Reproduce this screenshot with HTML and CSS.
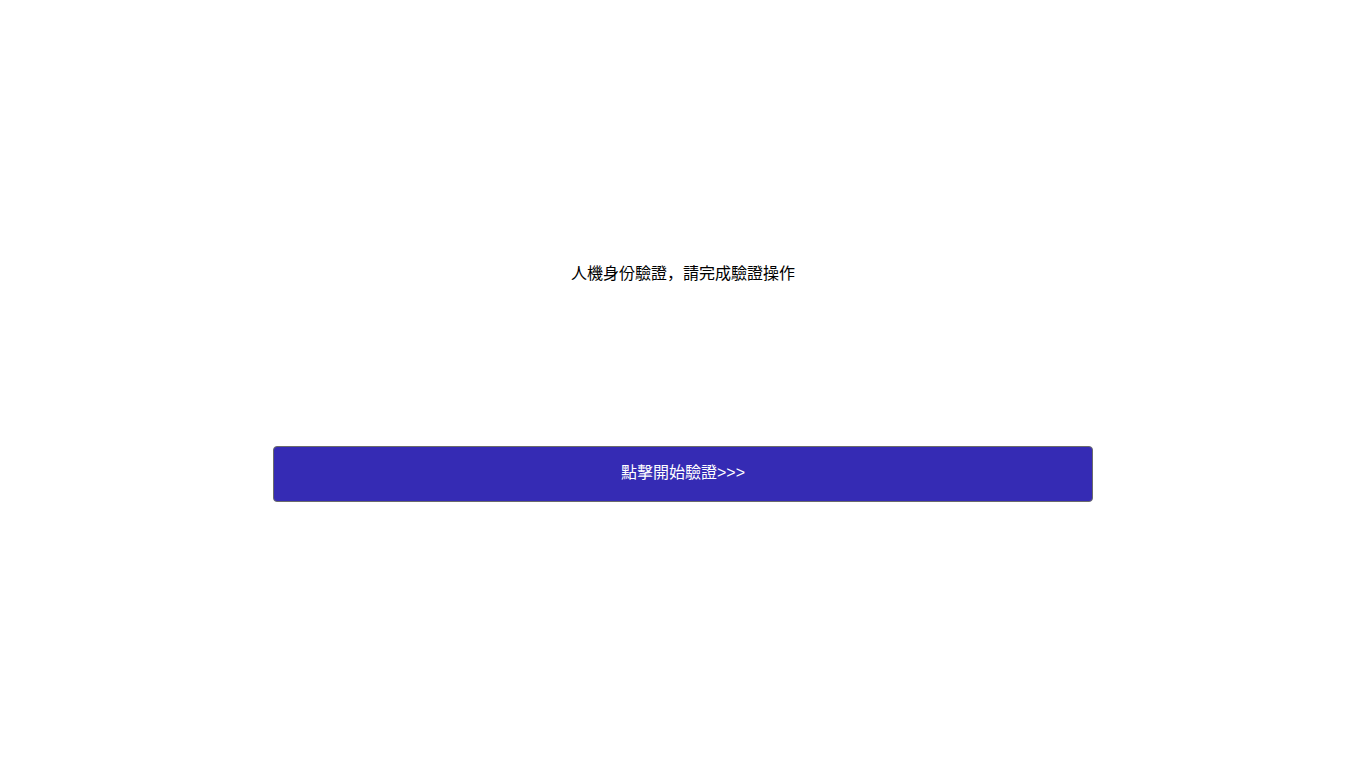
FILE: index.html
```html
<!DOCTYPE html>
<html>
<head>
<meta charset="utf-8">
<title>人機身份驗證</title>
<link rel="stylesheet" href="styles.css">
</head>
<body>
<main class="page">
  <p class="title">人機身份驗證，請完成驗證操作</p>
  <button class="verify-btn" type="button">點擊開始驗證&gt;&gt;&gt;</button>
</main>
</body>
</html>
```
FILE: styles.css
```css
html, body {
  margin: 0;
  padding: 0;
  background: #ffffff;
}
body {
  font-family: "Liberation Sans", "Noto Sans CJK JP", sans-serif;
  font-size: 16px;
  color: #000;
}
.page {
  display: flex;
  flex-direction: column;
  align-items: center;
  padding-top: 264px;
}
.title {
  margin: 0;
  line-height: 20px;
  text-align: center;
}
.verify-btn {
  margin-top: 162px;
  width: 60%;
  height: 56px;
  background: #352bb4;
  color: #ffffff;
  border: 1px solid #6b6b6b;
  border-radius: 4px;
  font-family: "Liberation Sans", "Noto Sans CJK JP", sans-serif;
  font-size: 16px;
  line-height: 20px;
  padding: 0 0 3px;
  cursor: pointer;
}
```
